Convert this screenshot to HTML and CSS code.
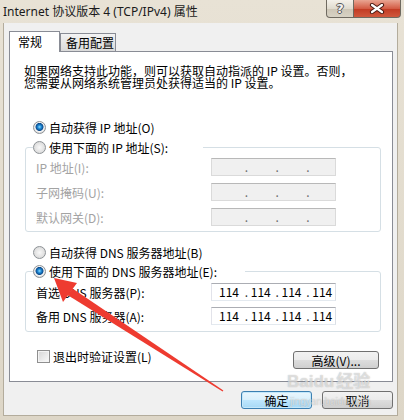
FILE: index.html
```html
<!DOCTYPE html>
<html lang="zh-CN">

<head>
    <meta charset="UTF-8">
    <meta name="viewport" content="width=device-width, initial-scale=1.0">
    <title>Internet 协议版本 4 (TCP/IPv4) 属性</title>
    <link rel="stylesheet" href="styles.css">
</head>

<body>
    <div class="window">
        <div class="titlebar">
            <span class="title">Internet 协议版本 4 (TCP/IPv4) 属性</span>
            <div class="caption-buttons">
                <div class="cap-btn cap-help">?</div>
                <div class="cap-btn cap-close">
                    <svg width="16" height="11" viewBox="0 0 16 11">
                        <path d="M3 2 L13 9 M13 2 L3 9" stroke="#4a1a12" stroke-width="4.2" stroke-linecap="round" fill="none" />
                        <path d="M3 2 L13 9 M13 2 L3 9" stroke="#ffffff" stroke-width="2.2" stroke-linecap="round" fill="none" />
                    </svg>
                </div>
            </div>
        </div>

        <div class="client">
            <div class="tabs">
                <div class="tab tab-active">常规</div>
                <div class="tab">备用配置</div>
            </div>

            <div class="panel">
                <div class="intro">
                    <div class="intro-line">如果网络支持此功能，则可以获取自动指派的 IP 设置。否则，</div>
                    <div class="intro-line">您需要从网络系统管理员处获得适当的 IP 设置。</div>
                </div>

                <div class="option option-first"><span class="radio checked"></span>自动获得 IP 地址(O)</div>

                <fieldset class="group ip-group">
                    <legend class="legend-ip">
                        <div class="legend-opt"><span class="radio"></span>使用下面的 IP 地址(S):</div>
                    </legend>
                    <div class="field-row disabled">
                        <span class="field-label">IP 地址(I):</span>
                        <div class="ip-box">
                            <span class="oct"></span>
                            <span class="oct"><i class="dot">.</i></span>
                            <span class="oct"><i class="dot">.</i></span>
                            <span class="oct"><i class="dot">.</i></span>
                        </div>
                    </div>
                    <div class="field-row disabled">
                        <span class="field-label">子网掩码(U):</span>
                        <div class="ip-box">
                            <span class="oct"></span>
                            <span class="oct"><i class="dot">.</i></span>
                            <span class="oct"><i class="dot">.</i></span>
                            <span class="oct"><i class="dot">.</i></span>
                        </div>
                    </div>
                    <div class="field-row disabled">
                        <span class="field-label">默认网关(D):</span>
                        <div class="ip-box">
                            <span class="oct"></span>
                            <span class="oct"><i class="dot">.</i></span>
                            <span class="oct"><i class="dot">.</i></span>
                            <span class="oct"><i class="dot">.</i></span>
                        </div>
                    </div>
                </fieldset>

                <div class="option option-dns"><span class="radio"></span>自动获得 DNS 服务器地址(B)</div>

                <fieldset class="group dns-group">
                    <legend class="legend-dns">
                        <div class="legend-opt"><span class="radio checked"></span>使用下面的 DNS 服务器地址(E):</div>
                    </legend>
                    <div class="field-row">
                        <span class="field-label">首选 DNS 服务器(P):</span>
                        <div class="ip-box">
                            <span class="oct oct-first">114</span>
                            <span class="oct"><i class="dot">.</i>114</span>
                            <span class="oct"><i class="dot">.</i>114</span>
                            <span class="oct"><i class="dot">.</i>114</span>
                        </div>
                    </div>
                    <div class="field-row">
                        <span class="field-label">备用 DNS 服务器(A):</span>
                        <div class="ip-box">
                            <span class="oct oct-first">114</span>
                            <span class="oct"><i class="dot">.</i>114</span>
                            <span class="oct"><i class="dot">.</i>114</span>
                            <span class="oct"><i class="dot">.</i>114</span>
                        </div>
                    </div>
                </fieldset>

                <div class="bottom-row">
                    <div class="check-row"><span class="checkbox"></span>退出时验证设置(L)</div>
                    <button class="btn btn-adv">高级(V)...</button>
                </div>
            </div>

            <div class="dialog-buttons">
                <button class="btn btn-default">确定</button>
                <button class="btn">取消</button>
            </div>
        </div>

        <!-- 标注箭头 -->
        <svg class="arrow" width="404" height="420" viewBox="0 0 404 420">
            <polygon points="54,278 77,283 63,302" fill="#ee3b30" />
            <polygon points="67.5,295 72.5,288.5 223.4,390.4 222.6,391.6" fill="#ee3b30" />
        </svg>

        <div class="watermark">
            <div class="wm-logo">Bai<span class="wm-du">du</span>经验</div>
            <div class="wm-url">jingyan.baidu.com</div>
        </div>
    </div>
</body>

</html>
```

FILE: styles.css
```css
* {
    box-sizing: border-box;
}

body {
    margin: 0;
    background-color: #ffffff;
    font-family: "Noto Sans CJK SC", sans-serif;
    font-size: 12px;
    color: #000000;
}

.window {
    position: relative;
    width: 404px;
    height: 420px;
    display: flex;
    flex-direction: column;
    overflow: hidden;
    background: linear-gradient(#e8e2d5, #ddd6c7);
}

.titlebar {
    height: 23px;
    flex-shrink: 0;
    display: flex;
    align-items: flex-start;
    padding-left: 3px;
}

.title {
    flex: 1;
    font-family: "Noto Sans", "Noto Sans CJK SC", sans-serif;
    font-size: 12px;
    line-height: 24px;
    color: #1a1a1a;
}

.caption-buttons {
    display: flex;
    margin-right: 3px;
}

.cap-btn {
    height: 18px;
    display: flex;
    align-items: center;
    justify-content: center;
    border: 1px solid #6f6a60;
    border-top: none;
}

.cap-help {
    width: 28px;
    border-radius: 0 0 0 4px;
    background: linear-gradient(#f4f1ea, #e0dbcf 50%, #cdc6b6 51%, #d8d2c4);
    font-family: "DejaVu Sans", sans-serif;
    font-weight: bold;
    font-size: 13px;
    color: #f2f2f2;
    text-shadow: 1px 0 #555, -1px 0 #555, 0 1px #555, 0 -1px #555;
}

.cap-close {
    width: 47px;
    border-left: none;
    border-radius: 0 0 4px 0;
    background: linear-gradient(#e9a592, #d35c45 50%, #c13a22 51%, #d0583d);
}

.client {
    flex: 1;
    margin: 0 6px 4px 3px;
    padding: 8px 4px 0 5px;
    background-color: #f0f0f0;
    border: 1px solid #b3ac9c;
    border-top: none;
}

/* pestañas */
.tabs {
    display: flex;
    align-items: flex-end;
    height: 20px;
}

.tab {
    width: 56px;
    height: 18px;
    padding-left: 5px;
    line-height: 17px;
    border: 1px solid #898c95;
    border-bottom: none;
    background: linear-gradient(#f3f3f3, #e6e6e6 50%, #dadada);
}

.tab-active {
    width: 51px;
    height: 21px;
    padding-left: 8px;
    line-height: 20px;
    margin-bottom: -1px;
    position: relative;
    z-index: 1;
    background: #ffffff;
}

.panel {
    height: 331px;
    background-color: #ffffff;
    border: 1px solid #898c95;
}

.intro {
    margin: 13px 0 0 14px;
}

.intro-line {
    height: 12px;
    line-height: 12px;
    white-space: nowrap;
}

.option,
.legend-opt {
    display: flex;
    align-items: center;
    gap: 3px;
    height: 16px;
}

.option {
    margin-left: 23px;
}

.option-first {
    margin-top: 30px;
}

.option-dns {
    margin-top: 12px;
}

.radio {
    flex-shrink: 0;
    width: 13px;
    height: 13px;
    border-radius: 50%;
    border: 1px solid #8d9296;
    background: radial-gradient(circle, #f8f8f8 0, #dadada 6px);
}

.radio.checked {
    background: radial-gradient(circle at 50% 45%, #8fdcff 0, #1f8ad6 1.8px, #0c4b8c 3.6px, #f8f8f8 4.4px, #dadada 6px);
}

/* grupos */
.group {
    margin: 4px 0 0 15px;
    width: 356px;
    min-width: 0;
    border: 1px solid #d5dfe5;
    border-radius: 3px;
    padding: 3px 7px 5px 7px;
}

.group legend {
    padding: 0;
    margin: 0;
}

.legend-ip {
    width: 170px;
}

.dns-group {
    margin-top: 3px;
    padding-top: 4px;
    padding-bottom: 6px;
}

.legend-dns {
    width: 212px;
}

.field-row {
    display: flex;
    align-items: center;
    height: 18px;
    margin: 7px 0 0 3px;
}

.field-row:first-of-type {
    margin-top: 0;
}

.dns-group .field-row + .field-row {
    margin-top: 6px;
}

.field-label {
    width: 175px;
}

.field-row.disabled .field-label {
    color: #a3a3a3;
}

.ip-box {
    width: 125px;
    height: 18px;
    display: flex;
    align-items: center;
    border: 1px solid;
    border-color: #abadb3 #dbdfe6 #e3e9ef #e2e3ea;
    background-color: #ffffff;
}

.field-row.disabled .ip-box {
    background-color: #f0f0f0;
    border-color: #b8b8b8 #dadada #dadada #dadada;
}

.oct {
    width: 31px;
    display: flex;
    align-items: center;
    padding-left: 2px;
    line-height: 16px;
}

.oct-first {
    padding-left: 7px;
}

.dot {
    width: 6px;
    font-style: normal;
    color: #333333;
}

.field-row.disabled .dot {
    color: #6d6d6d;
}

/* parte inferior */
.bottom-row {
    display: flex;
    justify-content: space-between;
    align-items: flex-start;
    margin: 17px 13px 0 27px;
}

.check-row {
    display: flex;
    align-items: center;
    gap: 3px;
    height: 14px;
}

.checkbox {
    width: 13px;
    height: 13px;
    border: 1px solid #8f8f8f;
    background: linear-gradient(135deg, #d6d6d6, #fbfbfb);
    box-shadow: inset 0 0 0 1px #f4f4f4;
}

.btn {
    height: 18px;
    padding: 0;
    display: flex;
    align-items: center;
    justify-content: center;
    font-family: inherit;
    font-size: 12px;
    color: #000000;
    border: 1px solid #707070;
    border-radius: 3px;
    background: linear-gradient(#f2f2f2, #ebebeb 50%, #dddddd 51%, #cfcfcf);
}

.btn-adv {
    width: 86px;
    margin-top: 2px;
}

.dialog-buttons {
    display: flex;
    justify-content: flex-end;
    gap: 10px;
    margin-top: 9px;
}

.dialog-buttons .btn {
    width: 71px;
}

.btn-default {
    border-color: #3c7fb1;
    background: linear-gradient(#eaf6fd, #d9f0fc 50%, #bee6fd 51%, #a7d9f5);
    box-shadow: inset 0 0 0 1px #c4e8fb;
}

/* flecha roja encima del diálogo */
.arrow {
    position: absolute;
    left: 0;
    top: 0;
    pointer-events: none;
}

.watermark {
    position: absolute;
    left: 287px;
    top: 372px;
    pointer-events: none;
    color: rgba(255, 255, 255, 0.55);
    text-shadow: 0 0 1px rgba(110, 110, 110, 0.55);
}

.wm-logo {
    font-family: "Liberation Sans", "Noto Sans CJK SC", sans-serif;
    font-weight: bold;
    font-size: 17px;
    line-height: 20px;
}

.wm-du {
    margin-right: 2px;
}

.wm-url {
    font-family: "Liberation Sans", sans-serif;
    font-size: 10px;
    line-height: 12px;
    margin-top: 4px;
    padding-left: 3px;
}
```
